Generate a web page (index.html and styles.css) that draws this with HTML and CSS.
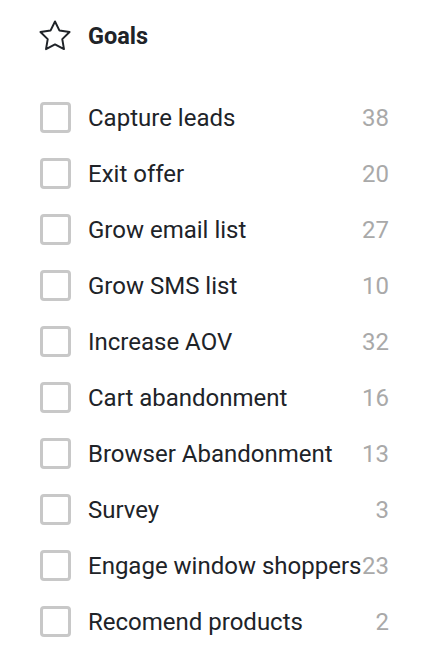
FILE: index.html
```html
<!DOCTYPE html>
<html lang="en">

<head>
   <meta charset="UTF-8">
   <meta name="viewport" content="width=device-width, initial-scale=1.0">
   <title>Goals</title>
   <link rel="stylesheet" href="styles.css">
</head>

<body>
   <div class="goals">
      <!-- Cabecera -->
      <div class="goals-header">
         <svg class="star" width="32" height="32" viewBox="1 1 22 22" fill="none" stroke="#1f2328" stroke-width="1.35" stroke-linejoin="round">
            <polygon points="12 2 15.09 8.26 22 9.27 17 14.14 18.18 21.02 12 17.77 5.82 21.02 7 14.14 2 9.27 8.91 8.26 12 2" />
         </svg>
         <span class="goals-title">Goals</span>
      </div>

      <!-- Lista de objetivos -->
      <ul class="goal-list">
         <li class="goal"><span class="check"></span><span class="goal-name">Capture leads</span><span class="goal-count">38</span></li>
         <li class="goal"><span class="check"></span><span class="goal-name">Exit offer</span><span class="goal-count">20</span></li>
         <li class="goal"><span class="check"></span><span class="goal-name">Grow email list</span><span class="goal-count">27</span></li>
         <li class="goal"><span class="check"></span><span class="goal-name">Grow SMS list</span><span class="goal-count">10</span></li>
         <li class="goal"><span class="check"></span><span class="goal-name">Increase AOV</span><span class="goal-count">32</span></li>
         <li class="goal"><span class="check"></span><span class="goal-name">Cart abandonment</span><span class="goal-count">16</span></li>
         <li class="goal"><span class="check"></span><span class="goal-name">Browser Abandonment</span><span class="goal-count">13</span></li>
         <li class="goal"><span class="check"></span><span class="goal-name">Survey</span><span class="goal-count">3</span></li>
         <li class="goal"><span class="check"></span><span class="goal-name">Engage window shoppers</span><span class="goal-count">23</span></li>
         <li class="goal"><span class="check"></span><span class="goal-name">Recomend products</span><span class="goal-count">2</span></li>
      </ul>
   </div>
</body>

</html>
```

FILE: styles.css
```css
body {
   margin: 0;
   background: #fff;
   font-family: Roboto, "Noto Sans", sans-serif;
   color: #202328;
}

.goals {
   width: 349px;
   padding: 8px 0 0 40px;
}

/* Cabecera con la estrella */
.goals-header {
   display: flex;
   align-items: center;
   gap: 17px;
   height: 56px;
   margin-bottom: 25px;
}

.star {
   margin-left: -1px;
   flex-shrink: 0;
}

.goals-title {
   font-size: 23.5px;
   font-weight: 700;
}

/* Lista */
.goal-list {
   list-style: none;
   margin: 0;
   padding: 0;
}

.goal {
   display: flex;
   align-items: center;
   height: 56px;
   font-size: 24px;
}

.check {
   box-sizing: border-box;
   width: 31px;
   height: 31px;
   border: 3px solid #c8c8c8;
   border-radius: 4px;
   flex-shrink: 0;
   margin-right: 17px;
}

.goal-name {
   flex: 1;
   padding-top: 2px;
   white-space: nowrap;
}

.goal-count {
   padding-top: 2px;
   color: #a9a9a9;
   text-align: right;
   white-space: nowrap;
}
```
